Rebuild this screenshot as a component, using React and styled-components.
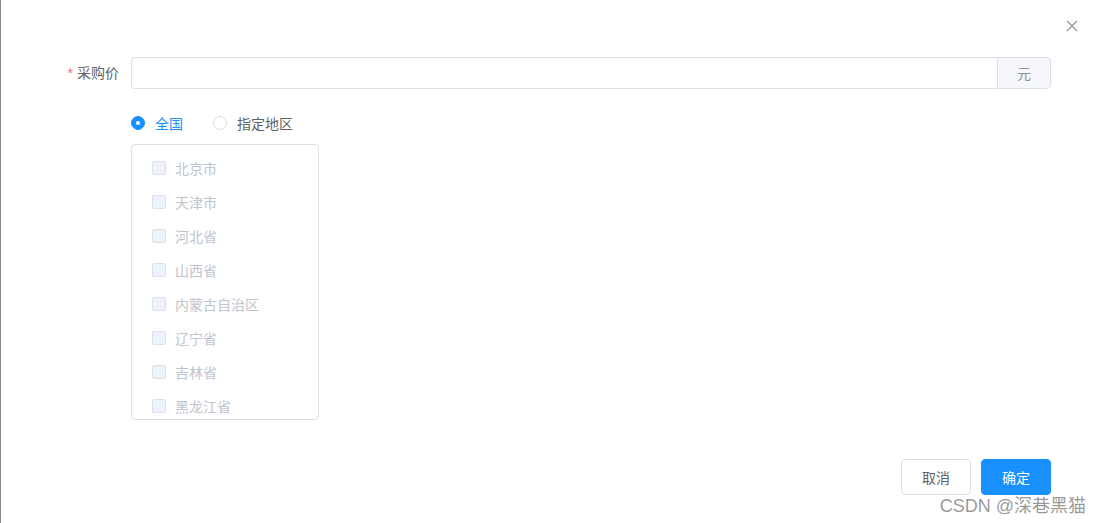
import React, { useState } from 'react';
import styled, { createGlobalStyle } from 'styled-components';

const GlobalStyle = createGlobalStyle`
  html, body {
    margin: 0;
    padding: 0;
    background: #fff;
  }
  body {
    font-family: "Liberation Sans", "Noto Sans CJK SC", sans-serif;
    font-size: 14px;
    color: #606266;
  }
`;

const Dialog = styled.div`
  position: relative;
  width: 1101px;
  height: 523px;
  box-sizing: border-box;
  border-left: 1px solid #8a8a8a;
  background: #fff;
  display: flex;
  flex-direction: column;
`;

const CloseButton = styled.button`
  position: absolute;
  top: 19px;
  right: 22px;
  width: 14px;
  height: 14px;
  padding: 0;
  border: none;
  background: none;
  cursor: pointer;
  display: flex;
  align-items: center;
  justify-content: center;
`;

const Body = styled.div`
  flex: 1;
  padding: 57px 50px 0 30px;
  display: flex;
  flex-direction: column;
`;

const FormItem = styled.div`
  display: flex;
  align-items: ${p => (p.$top ? 'flex-start' : 'center')};
`;

const Label = styled.label`
  width: 100px;
  flex-shrink: 0;
  box-sizing: border-box;
  padding-right: 12px;
  text-align: right;
  line-height: 32px;
  color: #606266;
  font-size: 14px;

  &::before {
    content: ${p => (p.$required ? '"*"' : 'none')};
    color: #f56c6c;
    margin-right: 4px;
  }
`;

const InputGroup = styled.div`
  flex: 1;
  display: flex;
  height: 32px;
`;

const Input = styled.input`
  flex: 1;
  min-width: 0;
  height: 32px;
  box-sizing: border-box;
  border: 1px solid #dcdfe6;
  border-right: none;
  border-radius: 4px 0 0 4px;
  padding: 0 15px;
  font: inherit;
  color: #606266;
  outline: none;
`;

const Append = styled.div`
  width: 54px;
  box-sizing: border-box;
  border: 1px solid #dcdfe6;
  border-radius: 0 4px 4px 0;
  background: #f5f7fa;
  color: #909399;
  display: flex;
  align-items: center;
  justify-content: center;
`;

const Content = styled.div`
  display: flex;
  flex-direction: column;
`;

const RadioGroup = styled.div`
  display: flex;
  align-items: center;
  height: 32px;
  margin-top: 18px;
  margin-bottom: 5px;
`;

const Radio = styled.label`
  display: flex;
  align-items: center;
  gap: 10px;
  margin-right: 30px;
  cursor: pointer;
  color: ${p => (p.$checked ? '#1890ff' : '#606266')};
  font-size: 14px;
`;

const RadioDot = styled.span`
  width: 14px;
  height: 14px;
  box-sizing: border-box;
  border-radius: 50%;
  border: 1px solid ${p => (p.$checked ? '#1890ff' : '#dcdfe6')};
  background: ${p => (p.$checked ? '#1890ff' : '#fff')};
  display: flex;
  align-items: center;
  justify-content: center;

  &::after {
    content: '';
    width: 4px;
    height: 4px;
    border-radius: 50%;
    background: #fff;
    display: ${p => (p.$checked ? 'block' : 'none')};
  }
`;

const RegionBox = styled.div`
  width: 188px;
  height: 276px;
  box-sizing: border-box;
  border: 1px solid #dcdfe6;
  border-radius: 4px;
  padding: 6px 0 0 20px;
`;

const CheckRow = styled.div`
  display: flex;
  align-items: center;
  gap: 9px;
  height: 34px;
  color: #c0c4cc;
  font-size: 14px;
`;

const CheckBox = styled.span`
  width: 14px;
  height: 14px;
  box-sizing: border-box;
  border: 1px solid #dcdfe6;
  border-radius: 2px;
  background: #edf2fc;
`;

const Footer = styled.div`
  display: flex;
  justify-content: flex-end;
  gap: 10px;
  padding: 0 50px 28px 0;
`;

const Button = styled.button`
  height: 36px;
  padding: 0 20px;
  box-sizing: border-box;
  border-radius: 4px;
  font-family: inherit;
  font-size: 14px;
  cursor: pointer;
  border: 1px solid ${p => (p.$primary ? '#1890ff' : '#dcdfe6')};
  background: ${p => (p.$primary ? '#1890ff' : '#fff')};
  color: ${p => (p.$primary ? '#fff' : '#606266')};
`;

const Watermark = styled.div`
  position: absolute;
  right: 15px;
  bottom: 6px;
  font-size: 18px;
  color: rgba(120, 120, 120, 0.75);
  pointer-events: none;
`;

const provinces = [
  '北京市', '天津市', '河北省', '山西省',
  '内蒙古自治区', '辽宁省', '吉林省', '黑龙江省',
];

export default function App() {
  const [scope, setScope] = useState('all');

  return (
    <>
      <GlobalStyle />
      <Dialog>
        <CloseButton aria-label="close">
          <svg width="12" height="12" viewBox="0 0 12 12">
            <path d="M1 1 L11 11 M11 1 L1 11" stroke="#909399" strokeWidth="1.2" fill="none" />
          </svg>
        </CloseButton>
        <Body>
          <FormItem>
            <Label $required>采购价</Label>
            <InputGroup>
              <Input />
              <Append>元</Append>
            </InputGroup>
          </FormItem>
          <FormItem $top>
            <Label />
            <Content>
              <RadioGroup>
                <Radio $checked={scope === 'all'} onClick={() => setScope('all')}>
                  <RadioDot $checked={scope === 'all'} />
                  全国
                </Radio>
                <Radio $checked={scope === 'area'} onClick={() => setScope('area')}>
                  <RadioDot $checked={scope === 'area'} />
                  指定地区
                </Radio>
              </RadioGroup>
              <RegionBox>
                {provinces.map(p => (
                  <CheckRow key={p}>
                    <CheckBox />
                    {p}
                  </CheckRow>
                ))}
              </RegionBox>
            </Content>
          </FormItem>
        </Body>
        <Footer>
          <Button>取消</Button>
          <Button $primary>确定</Button>
        </Footer>
        <Watermark>CSDN @深巷黑猫</Watermark>
      </Dialog>
    </>
  );
}
